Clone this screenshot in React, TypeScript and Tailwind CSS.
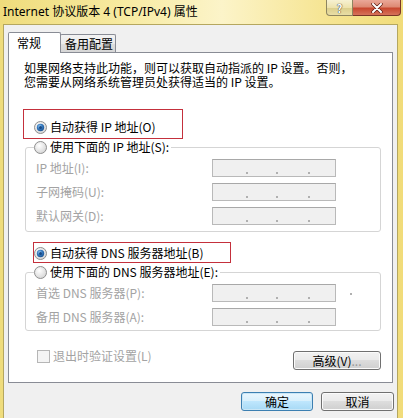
import React from "react";

const cjk = "font-['Noto_Sans_CJK_SC','Noto_Sans',sans-serif]";

function Radio({ checked }: { checked?: boolean }) {
  return (
    <svg width="13" height="13" viewBox="0 0 13 13" className="shrink-0">
      <defs>
        <radialGradient id="rbg" cx="0.4" cy="0.35" r="0.7">
          <stop offset="0" stopColor="#ffffff" />
          <stop offset="1" stopColor="#d4d4d4" />
        </radialGradient>
        <radialGradient id="rdot" cx="0.4" cy="0.35" r="0.7">
          <stop offset="0" stopColor="#9fcdf3" />
          <stop offset="0.5" stopColor="#3479bf" />
          <stop offset="1" stopColor="#1a4f8c" />
        </radialGradient>
      </defs>
      <circle cx="6.5" cy="6.5" r="6" fill="url(#rbg)" stroke="#8f8f8f" strokeWidth="1" />
      {checked && (
        <>
          <circle cx="6.5" cy="6.5" r="3.7" fill="url(#rdot)" />
          <circle cx="6.5" cy="6.5" r="1.5" fill="#1b4a84" />
        </>
      )}
    </svg>
  );
}

function IpBox() {
  return (
    <div className="w-[124px] h-[18px] border border-[#b9b9b9] border-t-[#a8a8a8] bg-[#f0f0f0] flex items-start">
      <div className="ml-[33px] mt-[12px] w-[2px] h-[2px] bg-[#b0b0b0]" />
      <div className="ml-[28px] mt-[12px] w-[2px] h-[2px] bg-[#b0b0b0]" />
      <div className="ml-[30px] mt-[12px] w-[2px] h-[2px] bg-[#b0b0b0]" />
    </div>
  );
}

function Row({ label, extraDot }: { label: string; extraDot?: boolean }) {
  return (
    <div className="flex items-center h-[18px]">
      <div className="w-[178px] pl-[2px] text-[12px] leading-[14px] text-[#a3a3a3] whitespace-nowrap">{label}</div>
      <IpBox />
      {extraDot && <div className="ml-[14px] mt-[2px] w-[2px] h-[2px] bg-[#b0b0b0]" />}
    </div>
  );
}

function WinButton({ children, def, className }: { children: React.ReactNode; def?: boolean; className?: string }) {
  return (
    <div
      className={
        "h-[19px] rounded-[3px] border flex items-center justify-center text-[12px] leading-[14px] text-black " +
        (def
          ? "border-[#3c7fb1] bg-[linear-gradient(#eaf6fd_0%,#d9f0fc_45%,#bee6fd_50%,#a7d9f5_100%)] shadow-[inset_0_0_0_1px_#c9e6f6] "
          : "border-[#707070] bg-[linear-gradient(#f2f2f2_0%,#ebebeb_45%,#dddddd_50%,#cfcfcf_100%)] shadow-[inset_0_0_0_1px_#fbfbfb] ") +
        (className ?? "")
      }
    >
      {children}
    </div>
  );
}

export default function App() {
  return (
    <div className={"w-[403px] h-[418px] overflow-hidden flex flex-col bg-[linear-gradient(90deg,#efdc7c_0%,#f7eaa0_30%,#fcf4c9_55%,#f6e594_80%,#f1dc7a_100%)] " + cjk}>
      {/* title bar */}
      <div className="h-[24px] flex items-start shrink-0">
        <div className="pl-[3px] pt-[4px] text-[12px] leading-[16px] text-black whitespace-nowrap font-['Noto_Sans','Noto_Sans_CJK_SC',sans-serif]">
          Internet 协议版本 4 (TCP/IPv4) 属性
        </div>
        <div className="ml-auto mr-[2px] flex">
          <div className="w-[27px] h-[16px] rounded-bl-[4px] border border-t-0 border-[#8d8560] bg-[linear-gradient(#f7f1d2_0%,#eee3ad_50%,#dccf8d_55%,#e9dea5_100%)] flex items-center justify-center text-[11px] font-bold leading-[12px] text-white [text-shadow:0_0_1px_#333,0_0_1px_#333]">
            ?
          </div>
          <div className="w-[48px] h-[16px] rounded-br-[4px] border border-t-0 border-l-0 border-[#7a3527] bg-[linear-gradient(#eaa898_0%,#de8a74_45%,#c8482f_55%,#d6725a_100%)] flex items-center justify-center">
            <svg width="12" height="10" viewBox="0 0 12 10">
              <path d="M2 1 L10 9 M10 1 L2 9" stroke="#5a1a10" strokeWidth="3.4" strokeLinecap="round" />
              <path d="M2 1 L10 9 M10 1 L2 9" stroke="#ffffff" strokeWidth="2" strokeLinecap="round" />
            </svg>
          </div>
        </div>
      </div>

      {/* client area */}
      <div className="ml-[3px] w-[395px] flex-1 bg-[#f0f0f0] border border-b-0 border-[#b5a75f] flex flex-col">
        {/* tabs */}
        <div className="ml-[4px] mt-[7px] h-[21px] -mb-[1px] flex items-end relative z-10">
          <div className="w-[53px] h-[21px] bg-white border border-b-0 border-[#898c95] rounded-t-[2px] pl-[8px] flex items-center text-[12px] leading-[14px] text-black">
            常规
          </div>
          <div className="w-[56px] h-[18px] mb-[1px] -ml-px border border-b-0 border-[#898c95] rounded-t-[2px] bg-[linear-gradient(#f3f3f3_0%,#ebebeb_50%,#dedede_50%,#d6d6d6_100%)] pl-[4px] flex items-center text-[12px] leading-[14px] text-black">
            备用配置
          </div>
        </div>

        {/* panel */}
        <div className="ml-[4px] w-[385px] h-[331px] bg-white border border-[#898c95] flex flex-col">
          <div className="ml-[15px] mt-[8px] text-[12px] leading-[14px] text-black whitespace-nowrap">
            <div>如果网络支持此功能，则可以获取自动指派的 IP 设置。否则，</div>
            <div>您需要从网络系统管理员处获得适当的 IP 设置。</div>
          </div>

          <div className="ml-[14px] mt-[20px] w-[160px] h-[30px] border border-[#c4303c] pt-[10px] pl-[10px]">
            <div className="flex items-center h-[14px] gap-[3px] text-[12px] leading-[14px] text-black whitespace-nowrap">
              <Radio checked />
              <span>自动获得 IP 地址(O)</span>
            </div>
          </div>

          <fieldset className="ml-[16px] mt-[1px] w-[356px] border border-[#d5d5d5] rounded-[3px] pl-[8px] pt-[5px] pb-[6px]">
            <legend className="h-[14px] pr-[2px]">
              <div className="flex items-center h-[14px] gap-[3px] text-[12px] leading-[14px] text-black whitespace-nowrap">
                <Radio />
                <span>使用下面的 IP 地址(S):</span>
              </div>
            </legend>
            <div className="flex flex-col gap-[6px]">
              <Row label="IP 地址(I):" />
              <Row label="子网掩码(U):" />
              <Row label="默认网关(D):" />
            </div>
          </fieldset>

          <div className="ml-[24px] mt-[10px] w-[198px] h-[21px] border border-[#c4303c] pt-[3px]">
            <div className="flex items-center h-[14px] gap-[3px] text-[12px] leading-[14px] text-black whitespace-nowrap">
              <Radio checked />
              <span>自动获得 DNS 服务器地址(B)</span>
            </div>
          </div>

          <fieldset className="ml-[16px] mt-[2px] w-[356px] border border-[#d5d5d5] rounded-[3px] pl-[8px] pt-[5px] pb-[4px]">
            <legend className="h-[14px] pr-[2px]">
              <div className="flex items-center h-[14px] gap-[3px] text-[12px] leading-[14px] text-black whitespace-nowrap">
                <Radio />
                <span>使用下面的 DNS 服务器地址(E):</span>
              </div>
            </legend>
            <div className="flex flex-col gap-[6px]">
              <Row label="首选 DNS 服务器(P):" extraDot />
              <Row label="备用 DNS 服务器(A):" />
            </div>
          </fieldset>

          <div className="mt-[18px] flex items-start">
            <div className="ml-[28px] flex items-center h-[14px] gap-[3px] text-[12px] leading-[14px] text-[#a3a3a3] whitespace-nowrap">
              <div className="w-[13px] h-[13px] border border-[#b6b6b6] bg-[#f4f4f4]" />
              <span>退出时验证设置(L)</span>
            </div>
            <WinButton className="ml-auto mr-[11px] mt-[2px] w-[88px]">
              <span>高级(V)</span>
              <span className="text-[#9a9a9a]">...</span>
            </WinButton>
          </div>
        </div>

        {/* bottom buttons */}
        <div className="mt-[9px] flex justify-end gap-[8px] mr-[3px]">
          <WinButton def className="w-[72px]">确定</WinButton>
          <WinButton className="w-[73px]">取消</WinButton>
        </div>
      </div>
    </div>
  );
}
